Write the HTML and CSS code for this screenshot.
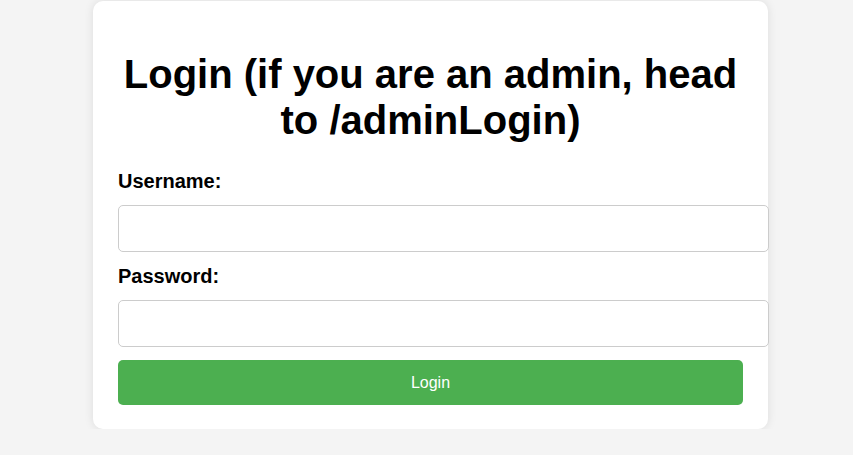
FILE: index.html
```html
<!DOCTYPE html>
<html lang="en">
<head>
    <meta charset="UTF-8">
    <meta name="viewport" content="width=device-width, initial-scale=1.0">
    <title>Login</title>
    <link rel="stylesheet" href="styles.css">
</head>
<body>
    <div class="login-box">
        <h1>Login (if you are an admin, head to /adminLogin)</h1>
        <form id="loginForm" method="post">
            <label for="username">Username:</label>
            <input type="text" name="username" id="username" required>
            <label for="password">Password:</label>
            <input type="password" name="password" id="password" required>
            <button type="submit">Login</button>
        </form>
    </div>
</body>
</html>
```

FILE: styles.css
```css
body {
    font-family: 'Liberation Sans', Arial, sans-serif;
    background-color: #f4f4f4;
    margin: 0;
    padding: 1px 0 0 8px;
}
.login-box {
    background-color: #fff;
    width: 625px;
    padding: 24px 25px;
    margin: 0 auto;
    border-radius: 10px;
    box-shadow: 0 0 10px rgba(0, 0, 0, 0.1);
}
.login-box h1 {
    font-size: 40px;
    text-align: center;
    margin: 26px 0 27px 0;
    line-height: 46px;
}
.login-box label {
    display: block;
    font-size: 20px;
    font-weight: bold;
    margin-bottom: 12px;
}
.login-box input {
    display: block;
    width: 100%;
    height: 21px;
    padding: 12px;
    margin-bottom: 13px;
    border: 1px solid #ccc;
    border-radius: 5px;
    font-size: 16px;
}
.login-box button {
    width: 100%;
    height: 45px;
    border: none;
    border-radius: 5px;
    background-color: #4CAF50;
    color: white;
    font-family: inherit;
    font-size: 16px;
    cursor: pointer;
}
.login-box button:hover {
    background-color: #45a049;
}
```
